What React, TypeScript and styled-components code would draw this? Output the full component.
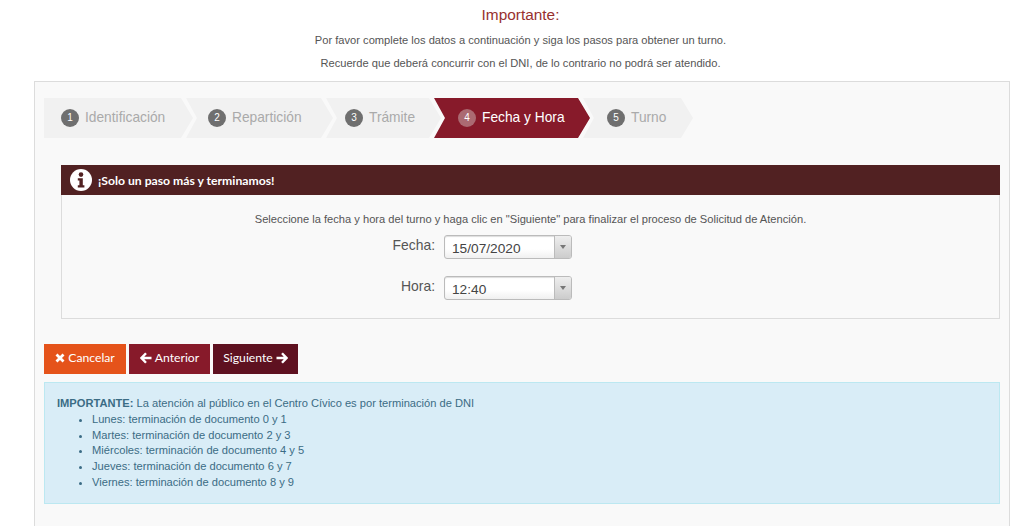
import React from "react";
import styled, { createGlobalStyle } from "styled-components";

const Global = createGlobalStyle`
  html, body { margin: 0; padding: 0; background: #fff; overflow: hidden; height: 526px; }
  body { font-family: "Liberation Sans", Arial, sans-serif; color: #555; }
  * { box-sizing: border-box; }
`;
const Page = styled.div`
  width: 1023px;
  height: 526px;
  overflow: hidden;
`;
const Header = styled.header`
  margin-left: 18px;
  height: 81px;
`;
const Title = styled.h2`
  margin: 0;
  padding-top: 6px;
  height: 33px;
  text-align: center;
  font-size: 15.4px;
  line-height: 18px;
  font-weight: 400;
  color: #98312f;
`;
const Intro = styled.p`
  margin: 0;
  height: 23px;
  text-align: center;
  font-size: 11.13px;
  line-height: 15px;
  color: #555;
`;
const Panel = styled.section`
  margin: 0 13px 0 34px;
  height: 460px;
  background: #f9f9f9;
  border: 1px solid #dcdcdc;
  padding: 16px 9px;
`;
const Steps = styled.ol`
  list-style: none;
  margin: 0;
  padding: 0;
  display: flex;
  height: 40px;
`;
const Step = styled.li<{ $w: number; $pad: number; $active?: boolean; $first?: boolean }>`
  width: ${(p) => p.$w}px;
  padding-left: ${(p) => p.$pad}px;
  padding-bottom: 1px;
  margin-left: ${(p) => (p.$first ? 0 : -7)}px;
  display: flex;
  align-items: center;
  gap: 6px;
  font-size: 13.75px;
  background: ${(p) => (p.$active ? "#871a2a" : "#f1f1f1")};
  color: ${(p) => (p.$active ? "#fff" : "#aaa")};
  clip-path: ${(p) =>
    p.$first
      ? "polygon(0 0, calc(100% - 12px) 0, 100% 50%, calc(100% - 12px) 100%, 0 100%)"
      : "polygon(0 0, calc(100% - 12px) 0, 100% 50%, calc(100% - 12px) 100%, 0 100%, 11px 50%)"};
`;
const Badge = styled.span<{ $active?: boolean }>`
  width: 18px;
  height: 18px;
  flex: none;
  border-radius: 50%;
  display: flex;
  align-items: center;
  justify-content: center;
  font-size: 10px;
  color: #fff;
  background: ${(p) => (p.$active ? "#ab6a72" : "#6f6f6f")};
`;
const Card = styled.div`
  margin: 27px 0 0 17px;
  border: 1px solid #dcdcdc;
  height: 154px;
`;
const CardHead = styled.div`
  margin: -1px -1px 0;
  height: 30px;
  background: #512122;
  color: #fff;
  display: flex;
  align-items: center;
  gap: 6px;
  padding-left: 9px;
  font-family: Lato, sans-serif;
  font-size: 12.2px;
  font-weight: 700;
`;
const CardBody = styled.div`
  padding-top: 17px;
`;
const Lead = styled.p`
  margin: 0 0 8px;
  text-align: center;
  font-size: 11.13px;
  line-height: 15px;
  color: #555;
`;
const Row = styled.div`
  display: grid;
  grid-template-columns: 373px 128px;
  column-gap: 9px;
  height: 41px;
  align-items: start;
`;
const Label = styled.label`
  text-align: right;
  font-size: 13.9px;
  line-height: 20px;
  color: #555;
`;
const Select = styled.div`
  height: 24px;
  border: 1px solid #bbb;
  border-radius: 3px;
  display: flex;
  overflow: hidden;
  background: linear-gradient(#fff 60%, #f0f0f0);
  box-shadow: inset 0 1px 1px #ddd;
  font-size: 13.7px;
  color: #444;
`;
const SelectValue = styled.span`
  flex: 1;
  padding: 3px 0 0 7px;
  line-height: 20px;
`;
const SelectArrow = styled.span`
  width: 17px;
  border-left: 1px solid #bbb;
  background: linear-gradient(#eee, #ccc);
  display: flex;
  align-items: center;
  justify-content: center;
  &::after {
    content: "";
    border-left: 3px solid transparent;
    border-right: 3px solid transparent;
    border-top: 4px solid #777;
  }
`;
const Actions = styled.div`
  display: flex;
  gap: 3px;
  margin-top: 25px;
`;
const Button = styled.button<{ $bg: string; $w: number }>`
  height: 30px;
  width: ${(p) => p.$w}px;
  border: 1px solid ${(p) => p.$bg};
  background: ${(p) => p.$bg};
  color: #fff;
  padding: 0 0 3px;
  font-family: Lato, sans-serif;
  font-size: 12.2px;
  display: flex;
  align-items: center;
  justify-content: center;
  gap: 3px;
`;
const Notice = styled.div`
  margin-top: 8px;
  height: 122px;
  background: #d9edf7;
  border: 1px solid #bce8f1;
  padding: 13px 12px;
  font-size: 11.13px;
  line-height: 15.8px;
  color: #3b6c85;
`;
const Days = styled.ul`
  margin: 0;
  padding-left: 35px;
`;

const Arrow = ({ dir }: { dir: "l" | "r" }) => (
  <svg width="12" height="12" viewBox="0 0 12 12" aria-hidden="true">
    <path
      d={dir === "l" ? "M6 1.2 1.5 6 6 10.8M2 6h9.5" : "M6 1.2 10.5 6 6 10.8M10 6H.5"}
      fill="none"
      stroke="#fff"
      strokeWidth="2.4"
    />
  </svg>
);
const Cross = () => (
  <svg width="10" height="10" viewBox="0 0 10 10" aria-hidden="true">
    <path d="M1.5 1.5l7 7M8.5 1.5l-7 7" stroke="#fff" strokeWidth="2.8" />
  </svg>
);
const Info = () => (
  <svg width="22" height="22" viewBox="0 0 22 22" aria-hidden="true">
    <circle cx="11" cy="11" r="11" fill="#fff" />
    <circle cx="11" cy="5.6" r="2.3" fill="#512122" />
    <path d="M7.8 9.2h5v7h1.6v2.2H7.8v-2.2h1.6v-4.8H7.8z" fill="#512122" />
  </svg>
);

const steps = [
  { n: 1, t: "Identificación", w: 149, pad: 17 },
  { n: 2, t: "Repartición", w: 147, pad: 22 },
  { n: 3, t: "Trámite", w: 115, pad: 19 },
  { n: 4, t: "Fecha y Hora", w: 156, pad: 24 },
  { n: 5, t: "Turno", w: 110, pad: 24 },
];
const days = [
  "Lunes: terminación de documento 0 y 1",
  "Martes: terminación de documento 2 y 3",
  "Miércoles: terminación de documento 4 y 5",
  "Jueves: terminación de documento 6 y 7",
  "Viernes: terminación de documento 8 y 9",
];

export default function App() {
  return (
    <Page>
      <Global />
      <Header>
        <Title>Importante:</Title>
        <Intro>Por favor complete los datos a continuación y siga los pasos para obtener un turno.</Intro>
        <Intro>Recuerde que deberá concurrir con el DNI, de lo contrario no podrá ser atendido.</Intro>
      </Header>
      <Panel>
        <Steps>
          {steps.map((s, i) => (
            <Step key={s.n} $w={s.w} $pad={s.pad} $first={i === 0} $active={s.n === 4}>
              <Badge $active={s.n === 4}>{s.n}</Badge>
              {s.t}
            </Step>
          ))}
        </Steps>
        <Card>
          <CardHead>
            <Info />
            ¡Solo un paso más y terminamos!
          </CardHead>
          <CardBody>
            <Lead>Seleccione la fecha y hora del turno y haga clic en "Siguiente" para finalizar el proceso de Solicitud de Atención.</Lead>
            <Row>
              <Label>Fecha:</Label>
              <Select>
                <SelectValue>15/07/2020</SelectValue>
                <SelectArrow />
              </Select>
            </Row>
            <Row>
              <Label>Hora:</Label>
              <Select>
                <SelectValue>12:40</SelectValue>
                <SelectArrow />
              </Select>
            </Row>
          </CardBody>
        </Card>
        <Actions>
          <Button $bg="#e5531a" $w={82}><Cross />Cancelar</Button>
          <Button $bg="#871a2a" $w={81}><Arrow dir="l" />Anterior</Button>
          <Button $bg="#5e1120" $w={85}>Siguiente<Arrow dir="r" /></Button>
        </Actions>
        <Notice>
          <strong>IMPORTANTE:</strong> La atención al público en el Centro Cívico es por terminación de DNI
          <Days>
            {days.map((d) => (
              <li key={d}>{d}</li>
            ))}
          </Days>
        </Notice>
      </Panel>
    </Page>
  );
}
